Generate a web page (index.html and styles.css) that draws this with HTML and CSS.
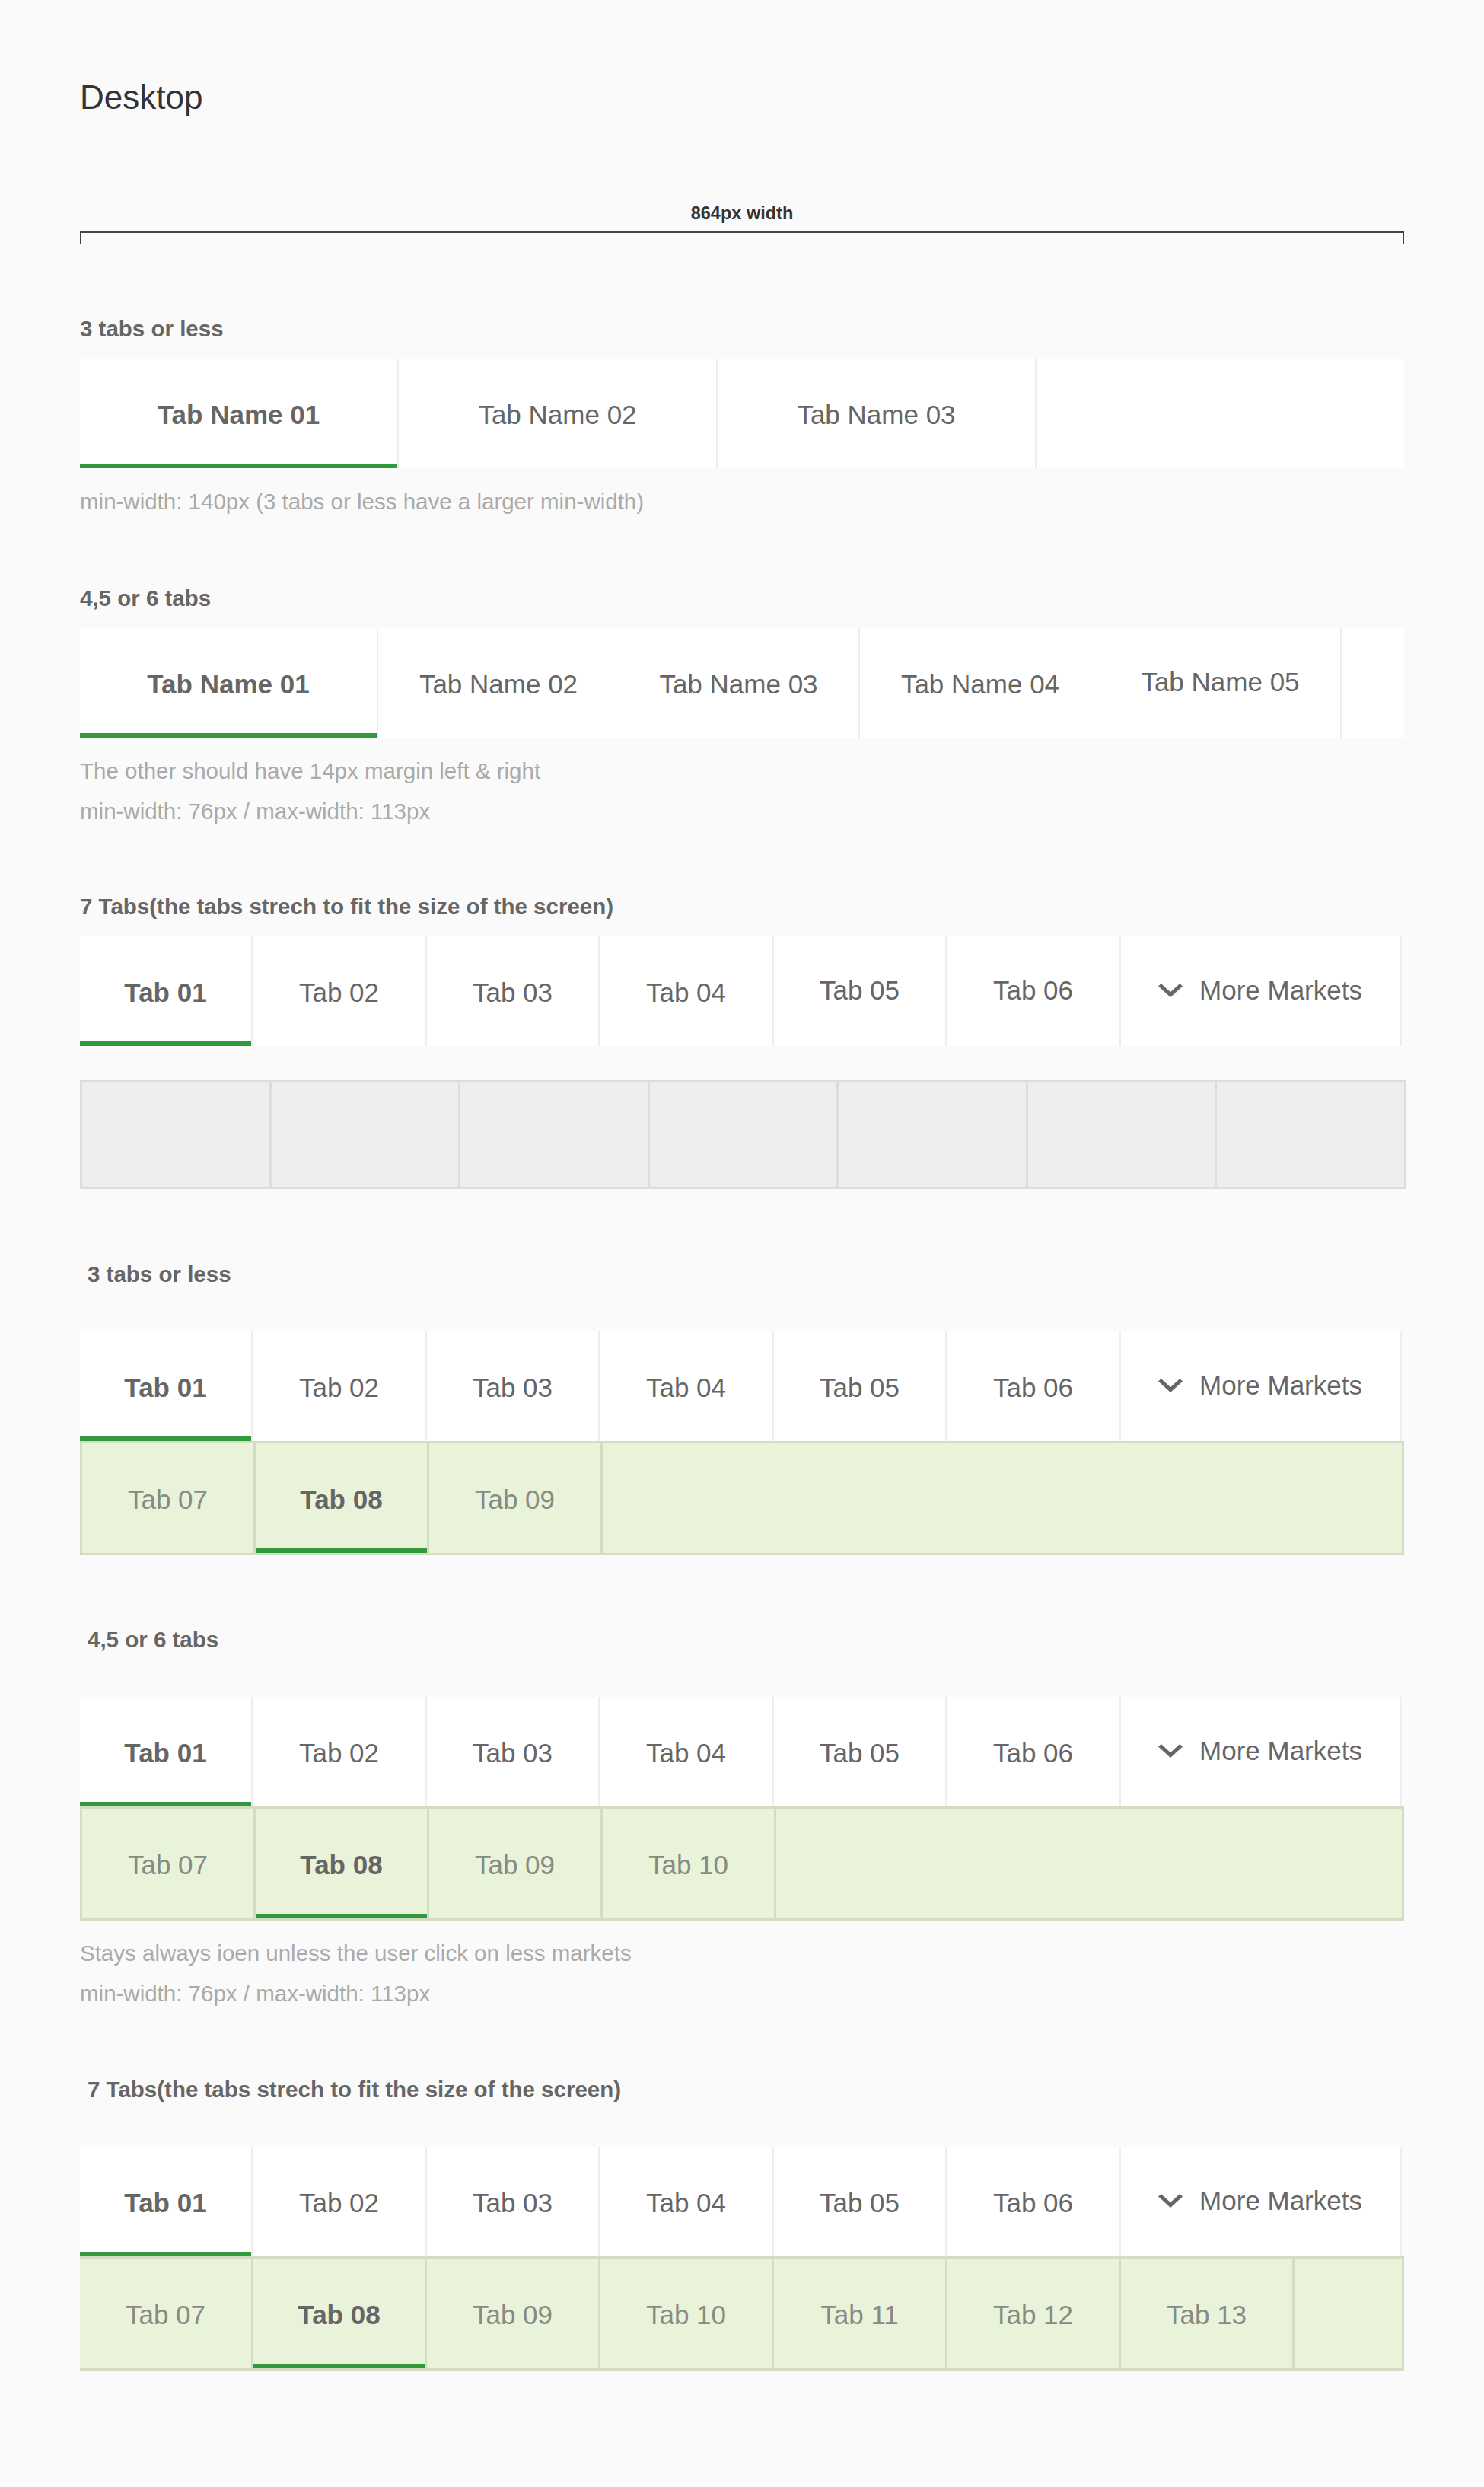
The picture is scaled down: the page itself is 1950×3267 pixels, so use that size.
FILE: index.html
```html
<!DOCTYPE html>
<html lang="en">
<head>
<meta charset="utf-8">
<title>Tabs – Desktop</title>
<link rel="stylesheet" href="styles.css">
</head>
<body>
<main class="page">
  <h1 class="title">Desktop</h1>

  <div class="ruler">
    <div class="ruler-label">864px width</div>
    <div class="ruler-line"></div>
  </div>

  <!-- 1 -->
  <section class="sec sec-1">
    <h2 class="sec-title">3 tabs or less</h2>
    <div class="tabs tabs-3">
      <div class="tab tab--div tab--active">Tab Name 01</div>
      <div class="tab tab--div">Tab Name 02</div>
      <div class="tab tab--div">Tab Name 03</div>
      <div class="tab tab--fill"></div>
    </div>
    <p class="note note-first">min-width: 140px (3 tabs or less have a larger min-width)</p>
  </section>

  <!-- 2 -->
  <section class="sec sec-2">
    <h2 class="sec-title">4,5 or 6 tabs</h2>
    <div class="tabs tabs-6">
      <div class="tab tab--first tab--div tab--active">Tab Name 01</div>
      <div class="tab tab--half">Tab Name 02</div>
      <div class="tab tab--half-end tab--div">Tab Name 03</div>
      <div class="tab tab--half">Tab Name 04</div>
      <div class="tab tab--half-end tab--div tab--raise">Tab Name 05</div>
      <div class="tab tab--fill"></div>
    </div>
    <p class="note note-first">The other should have 14px margin left &amp; right</p>
    <p class="note">min-width: 76px / max-width: 113px</p>
  </section>

  <!-- 3 -->
  <section class="sec sec-3">
    <h2 class="sec-title">7 Tabs(the tabs strech to fit the size of the screen)</h2>
    <div class="tabs tabs-7">
      <div class="tab tab--active">Tab 01</div>
      <div class="tab">Tab 02</div>
      <div class="tab">Tab 03</div>
      <div class="tab">Tab 04</div>
      <div class="tab tab--raise">Tab 05</div>
      <div class="tab tab--raise">Tab 06</div>
      <div class="tab tab--more tab--raise">
        <svg class="chevron" width="32" height="18" viewBox="6 8.59 12 7.41" preserveAspectRatio="none" aria-hidden="true"><path d="M16.59 8.59L12 13.17 7.41 8.59 6 10l6 6 6-6z"/></svg>
        <span>More Markets</span>
      </div>
    </div>
    <div class="placeholder">
      <div class="placeholder-cell"></div>
      <div class="placeholder-cell"></div>
      <div class="placeholder-cell"></div>
      <div class="placeholder-cell"></div>
      <div class="placeholder-cell"></div>
      <div class="placeholder-cell"></div>
      <div class="placeholder-cell"></div>
    </div>
  </section>

  <!-- 4 -->
  <section class="sec sec-4">
    <h2 class="sec-title sec-title--inset">3 tabs or less</h2>
    <div class="tabs tabs-7">
      <div class="tab tab--active">Tab 01</div>
      <div class="tab">Tab 02</div>
      <div class="tab">Tab 03</div>
      <div class="tab">Tab 04</div>
      <div class="tab">Tab 05</div>
      <div class="tab">Tab 06</div>
      <div class="tab tab--more tab--raise">
        <svg class="chevron" width="32" height="18" viewBox="6 8.59 12 7.41" preserveAspectRatio="none" aria-hidden="true"><path d="M16.59 8.59L12 13.17 7.41 8.59 6 10l6 6 6-6z"/></svg>
        <span>More Markets</span>
      </div>
    </div>
    <div class="subtabs">
      <div class="subtab">Tab 07</div>
      <div class="subtab subtab--active">Tab 08</div>
      <div class="subtab">Tab 09</div>
    </div>
  </section>

  <!-- 5 -->
  <section class="sec sec-5">
    <h2 class="sec-title sec-title--inset">4,5 or 6 tabs</h2>
    <div class="tabs tabs-7">
      <div class="tab tab--active">Tab 01</div>
      <div class="tab">Tab 02</div>
      <div class="tab">Tab 03</div>
      <div class="tab">Tab 04</div>
      <div class="tab">Tab 05</div>
      <div class="tab">Tab 06</div>
      <div class="tab tab--more tab--raise">
        <svg class="chevron" width="32" height="18" viewBox="6 8.59 12 7.41" preserveAspectRatio="none" aria-hidden="true"><path d="M16.59 8.59L12 13.17 7.41 8.59 6 10l6 6 6-6z"/></svg>
        <span>More Markets</span>
      </div>
    </div>
    <div class="subtabs">
      <div class="subtab">Tab 07</div>
      <div class="subtab subtab--active">Tab 08</div>
      <div class="subtab">Tab 09</div>
      <div class="subtab">Tab 10</div>
    </div>
    <p class="note note-first note-tight">Stays always ioen unless the user click on less markets</p>
    <p class="note">min-width: 76px / max-width: 113px</p>
  </section>

  <!-- 6 -->
  <section class="sec sec-6">
    <h2 class="sec-title sec-title--inset">7 Tabs(the tabs strech to fit the size of the screen)</h2>
    <div class="tabs tabs-7">
      <div class="tab tab--active">Tab 01</div>
      <div class="tab">Tab 02</div>
      <div class="tab">Tab 03</div>
      <div class="tab">Tab 04</div>
      <div class="tab">Tab 05</div>
      <div class="tab">Tab 06</div>
      <div class="tab tab--more tab--raise">
        <svg class="chevron" width="32" height="18" viewBox="6 8.59 12 7.41" preserveAspectRatio="none" aria-hidden="true"><path d="M16.59 8.59L12 13.17 7.41 8.59 6 10l6 6 6-6z"/></svg>
        <span>More Markets</span>
      </div>
    </div>
    <div class="subtabs subtabs--open-left">
      <div class="subtab">Tab 07</div>
      <div class="subtab subtab--active">Tab 08</div>
      <div class="subtab">Tab 09</div>
      <div class="subtab">Tab 10</div>
      <div class="subtab">Tab 11</div>
      <div class="subtab">Tab 12</div>
      <div class="subtab">Tab 13</div>
    </div>
  </section>
</main>
</body>
</html>
```

FILE: styles.css
```css
html, body {
  margin: 0;
  padding: 0;
  background: #fafafa;
}

body {
  font-family: "Liberation Sans", Arial, Helvetica, sans-serif;
  color: #666666;
}

.page {
  width: 1745px;
  padding: 102px 0 150px 105px;
}

.title {
  margin: 0;
  font-size: 44px;
  line-height: 52px;
  font-weight: 400;
  color: #333333;
}

/* ruler */
.ruler {
  width: 1740px;
  margin-top: 112px;
}

.ruler-label {
  text-align: center;
  font-size: 23.5px;
  line-height: 28px;
  font-weight: 700;
  color: #333333;
}

.ruler-line {
  margin-top: 9px;
  height: 15px;
  border-top: 3px solid #444444;
  border-left: 2px solid #444444;
  border-right: 2px solid #444444;
  box-sizing: content-box;
  width: 1736px;
}

/* sections */
.sec-title {
  margin: 0 0 21px;
  font-size: 29.5px;
  line-height: 36px;
  font-weight: 700;
  color: #666666;
}

.sec-title--inset {
  padding-left: 10px;
  margin-bottom: 57px;
}

.sec-1 { margin-top: 93px; }
.sec-2 { margin-top: 83px; }
.sec-3 { margin-top: 81px; }
.sec-4 { margin-top: 94px; }
.sec-5 { margin-top: 93px; }
.sec-6 { margin-top: 82px; }

.note {
  margin: 0;
  font-size: 29.5px;
  line-height: 53px;
  color: #aaaaaa;
}

.note-first { margin-top: 17px; }
.note-tight { margin-top: 16px; }

/* primary tabs */
.tabs {
  display: flex;
  height: 144px;
  background: #ffffff;
}

.tab {
  box-sizing: border-box;
  height: 144px;
  display: flex;
  align-items: center;
  justify-content: center;
  padding-top: 4px;
  font-size: 35px;
  color: #666666;
  white-space: nowrap;
}

.tab--div {
  border-right: 2px solid #eeeeee;
}

.tab--active {
  font-weight: 700;
  box-shadow: inset 0 -6px 0 #30993c;
}

.tab--raise {
  padding-top: 0;
  padding-bottom: 2px;
}

.tab--fill {
  flex: 1;
}

.tabs-3 {
  width: 1740px;
}

.tabs-3 .tab {
  width: 419px;
}

.tabs-3 .tab--fill {
  width: auto;
}

.tabs-6 {
  width: 1740px;
}

.tabs-6 .tab--first { width: 392px; }
.tabs-6 .tab--half { width: 316px; }
.tabs-6 .tab--half-end { width: 317px; }

.tabs-7 {
  width: 1737px;
}

.tabs-7 .tab {
  width: 228px;
  border-right: 3px solid #eeeeee;
}

.tabs-7 .tab--more {
  width: 369px;
}

.chevron {
  display: block;
  margin-right: 22px;
  fill: #666666;
  flex: none;
}

/* grey placeholder row */
.placeholder {
  display: flex;
  box-sizing: border-box;
  width: 1743px;
  height: 143px;
  margin-top: 45px;
  border: 3px solid #dddddd;
  background: #eeeeee;
}

.placeholder-cell {
  flex: 1;
  box-sizing: border-box;
}

.placeholder-cell + .placeholder-cell {
  border-left: 3px solid #dddddd;
}

/* secondary (expanded) tabs */
.subtabs {
  display: flex;
  box-sizing: border-box;
  width: 1740px;
  height: 150px;
  border: 3px solid #d3ddc3;
  background: #e9f3d9;
}

.subtabs--open-left {
  border-left: 0;
}

.subtab {
  box-sizing: border-box;
  width: 228px;
  height: 144px;
  display: flex;
  align-items: center;
  justify-content: center;
  padding-top: 4px;
  border-right: 3px solid #d3ddc3;
  font-size: 35px;
  color: #888b85;
  white-space: nowrap;
}

.subtab--active {
  font-weight: 700;
  color: #666666;
  box-shadow: inset 0 -6px 0 #30993c;
}
```
